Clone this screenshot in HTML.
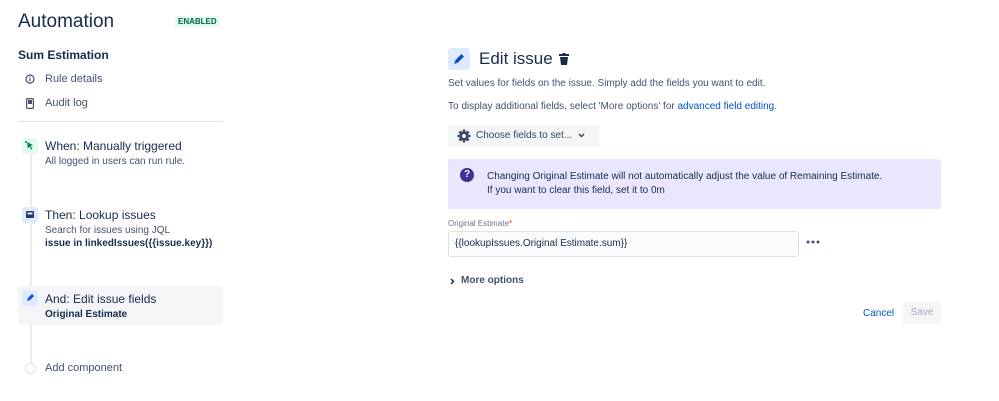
<!DOCTYPE html>
<html><head><meta charset="utf-8"><style>
*{margin:0;padding:0;box-sizing:border-box}
body{width:999px;height:401px;background:#fff;font-family:"Liberation Sans",sans-serif;color:#172b4d;position:relative;overflow:hidden;font-size:11px}
.a{position:absolute;white-space:nowrap}
.ic{position:absolute;width:16px;height:16px;border-radius:3px}
</style></head><body>
<div class="a" style="left:18px;top:11px;font-size:19px;">Automation</div>
<div class="a" style="left:175px;top:16px;font-size:8px;font-weight:bold;color:#006644;background:#e3fcef;padding:1px 3px;">ENABLED</div>
<div class="a" style="left:18px;top:48px;font-size:12px;font-weight:bold;">Sum Estimation</div>
<svg class="a" style="left:25px;top:74px" width="10" height="10" viewBox="0 0 10 10"><circle cx="5" cy="5" r="4" fill="none" stroke="#42526e" stroke-width="1.2"/><rect x="4.4" y="4.2" width="1.2" height="3" fill="#42526e"/><rect x="4.4" y="2.4" width="1.2" height="1.1" fill="#42526e"/></svg>
<div class="a" style="left:45px;top:73px;color:#42526e">Rule details</div>
<svg class="a" style="left:26px;top:98px" width="8" height="11" viewBox="0 0 8 11"><rect x="0.6" y="0.6" width="6.8" height="9.8" rx="1" fill="none" stroke="#42526e" stroke-width="1.2"/><rect x="2" y="2" width="4" height="4" fill="#42526e"/></svg>
<div class="a" style="left:45px;top:97px;color:#42526e">Audit log</div>
<div class="a" style="left:18px;top:121px;width:205px;height:1px;background:#dfe1e6"></div>
<div class="a" style="left:30px;top:150px;width:2px;height:215px;background:#ebecf0"></div>
<div class="ic" style="left:22px;top:138px;background:#e3fcef"><svg width="16" height="16"><path d="M5 4l6 3-2.5 1 2 3-1 .7-2-3-1.8 1.8z" fill="#00875a"/><circle cx="4" cy="4" r="1" fill="#00875a"/></svg></div>
<div class="a" style="left:45px;top:139px;font-size:12px;color:#172b4d">When: Manually triggered</div>
<div class="a" style="left:45px;top:156px;color:#42526e;font-size:10px">All logged in users can run rule.</div>
<div class="ic" style="left:22px;top:207px;background:#deebff"><svg width="16" height="16"><rect x="4" y="4" width="8" height="7" rx="1" fill="#253858"/><rect x="5.5" y="5.5" width="5" height="2" fill="#deebff"/></svg></div>
<div class="a" style="left:45px;top:208px;font-size:12px">Then: Lookup issues</div>
<div class="a" style="left:45px;top:225px;color:#42526e;font-size:10px">Search for issues using JQL</div>
<div class="a" style="left:45px;top:238px;font-weight:bold;font-size:10px">issue in linkedIssues({{issue.key}})</div>
<div class="a" style="left:18px;top:286px;width:205px;height:39px;background:#f4f5f7;border-radius:3px"></div>
<div class="ic" style="left:22px;top:290px;background:#deebff"><svg width="16" height="16"><path d="M5 11l1-3 4-4 2 2-4 4z" fill="#0052cc"/></svg></div>
<div class="a" style="left:45px;top:292px;font-size:12px">And: Edit issue fields</div>
<div class="a" style="left:45px;top:309px;font-weight:bold;font-size:10px">Original Estimate</div>
<div class="a" style="left:25px;top:363px;width:11px;height:11px;border-radius:50%;border:1.5px solid #dfe1e6;background:#fff"></div>
<div class="a" style="left:45px;top:362px;color:#42526e">Add component</div>

<div class="a" style="left:448px;top:48px;width:22px;height:22px;background:#deebff;border-radius:3px"><svg width="22" height="22"><path d="M6 16l1.5-4 6-6 2.5 2.5-6 6z" fill="#0052cc"/></svg></div>
<div class="a" style="left:479px;top:49px;font-size:17px">Edit issue</div>
<svg class="a" style="left:559px;top:53px" width="10" height="12" viewBox="0 0 10 12"><rect x="0" y="1" width="10" height="2" fill="#172b4d"/><rect x="3.5" y="0" width="3" height="1.5" fill="#172b4d"/><path d="M1 4h8l-1 8H2z" fill="#172b4d"/></svg>
<div class="a" style="left:448px;top:78px;color:#42526e;font-size:10px">Set values for fields on the issue. Simply add the fields you want to edit.</div>
<div class="a" style="left:448px;top:101px;color:#42526e;font-size:10px">To display additional fields, select 'More options' for <span style="color:#0052cc">advanced field editing</span>.</div>
<div class="a" style="left:448px;top:125px;width:151px;height:22px;background:#f4f5f7;border-radius:3px"></div>
<svg class="a" style="left:457px;top:129px" width="14" height="14" viewBox="0 0 14 14"><g fill="#344563"><circle cx="7" cy="7" r="4.6"/><rect x="5.8" y="0.5" width="2.4" height="13"/><rect x="0.5" y="5.8" width="13" height="2.4"/><rect x="5.8" y="0.5" width="2.4" height="13" transform="rotate(45 7 7)"/><rect x="5.8" y="0.5" width="2.4" height="13" transform="rotate(-45 7 7)"/></g><circle cx="7" cy="7" r="2" fill="#f4f5f7"/></svg>
<div class="a" style="left:476px;top:130px;font-size:10px;color:#344563">Choose fields to set...</div>
<svg class="a" style="left:578px;top:133px" width="7" height="5"><path d="M1 1l2.5 2.5L6 1" fill="none" stroke="#344563" stroke-width="1.4"/></svg>
<div class="a" style="left:448px;top:159px;width:493px;height:50px;background:#eae6ff;border-radius:3px"></div>
<div class="a" style="left:460px;top:168px;width:14px;height:14px;border-radius:50%;background:#403294;color:#fff;font-size:10px;font-weight:bold;text-align:center;line-height:14px">?</div>
<div class="a" style="left:487px;top:171px;font-size:10px">Changing Original Estimate will not automatically adjust the value of Remaining Estimate.</div>
<div class="a" style="left:487px;top:185px;font-size:10px">If you want to clear this field, set it to 0m</div>
<div class="a" style="left:448px;top:219px;font-size:8px;color:#6b778c">Original Estimate<span style="color:#de350b">*</span></div>
<div class="a" style="left:448px;top:231px;width:351px;height:26px;background:#fafbfc;border:1.5px solid #dfe1e6;border-radius:3px"></div>
<div class="a" style="left:455px;top:238px;font-size:10px">{{lookupIssues.Original Estimate.sum}}</div>
<svg class="a" style="left:806px;top:240px" width="14" height="4"><circle cx="2" cy="2" r="1.5" fill="#42526e"/><circle cx="7" cy="2" r="1.5" fill="#42526e"/><circle cx="12" cy="2" r="1.5" fill="#42526e"/></svg>
<svg class="a" style="left:450px;top:278px" width="5" height="7"><path d="M1 1l2.5 2.5L1 6" fill="none" stroke="#172b4d" stroke-width="1.4"/></svg>
<div class="a" style="left:461px;top:275px;font-size:10px;font-weight:bold;color:#42526e">More options</div>
<div class="a" style="left:863px;top:308px;font-size:10px;color:#0052cc">Cancel</div>
<div class="a" style="left:903px;top:302px;width:38px;height:22px;background:#f4f5f7;border-radius:3px;color:#a5adba;font-size:10px;text-align:center;line-height:22px">Save</div>
</body></html>
